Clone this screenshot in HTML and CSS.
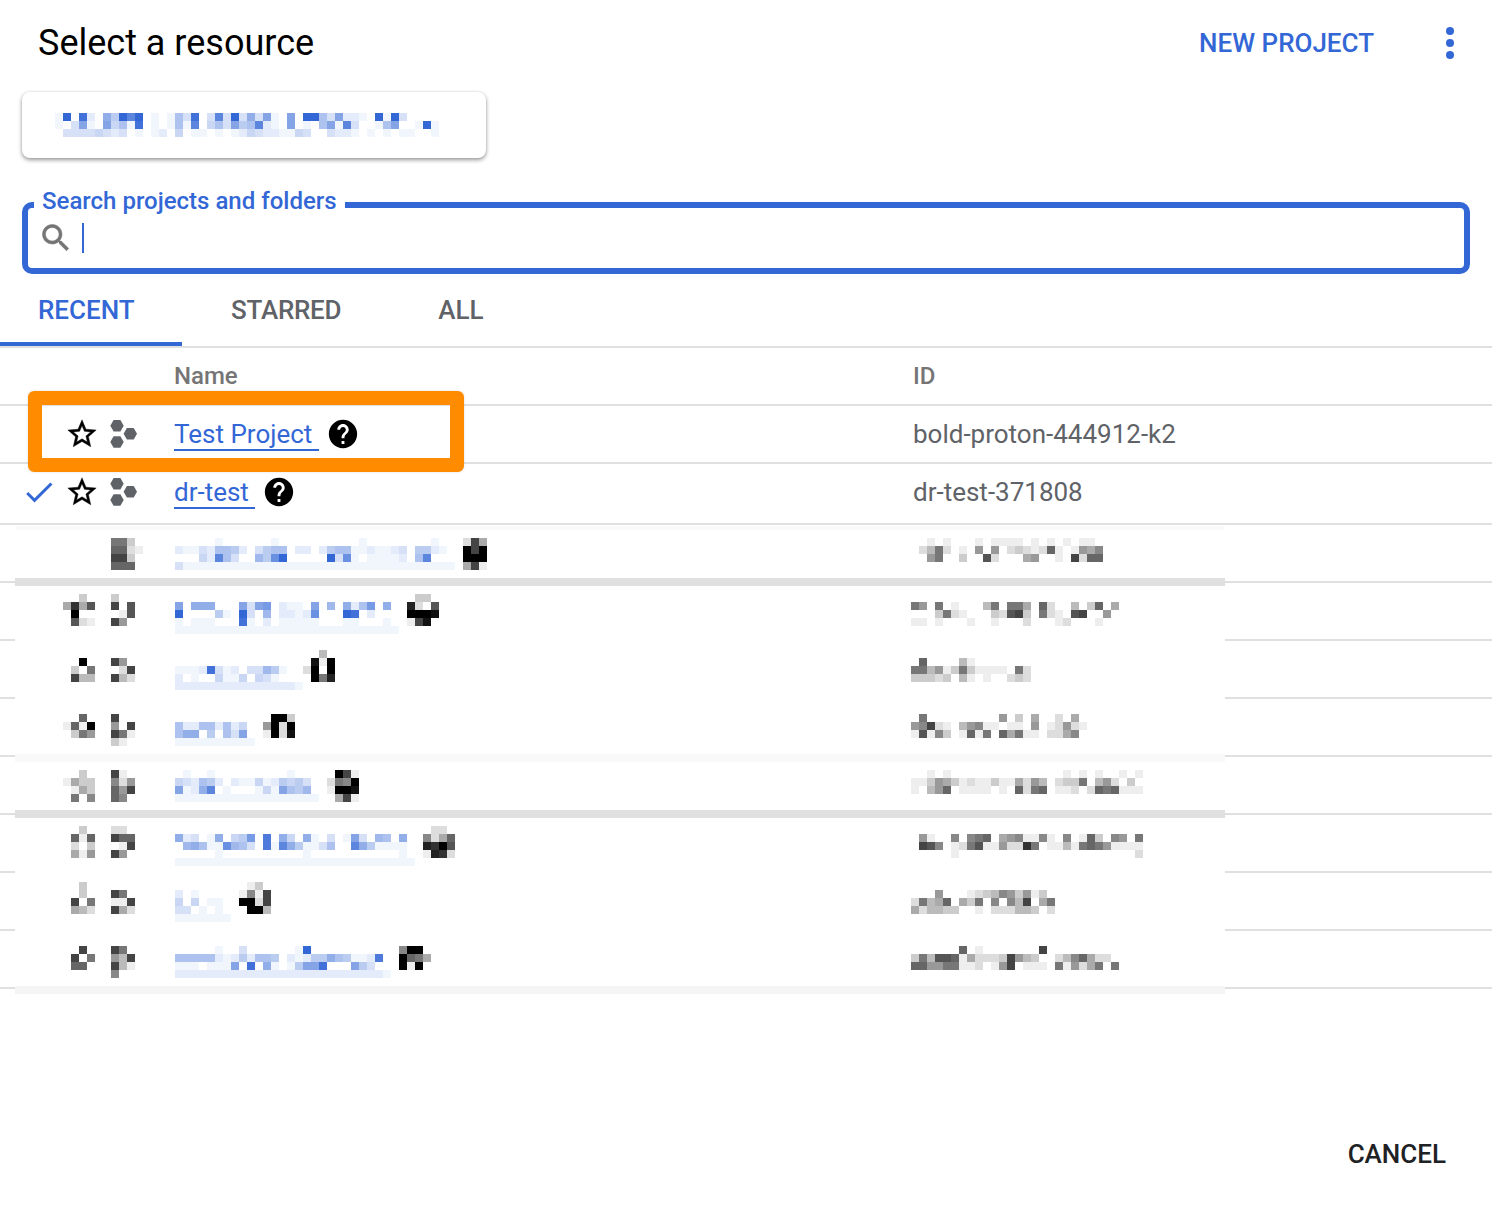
FILE: index.html
```html
<!DOCTYPE html>
<html lang="en">
<head>
<meta charset="utf-8">
<title>Select a resource</title>
<link rel="stylesheet" href="styles.css">
</head>
<body>
<main class="dialog">
  <header class="head">
    <h1 class="title">Select a resource</h1>
    <div class="head-actions">
      <button class="text-btn new-project">NEW PROJECT</button>
      <svg class="more" viewBox="0 0 24 24"><circle cx="12" cy="6" r="2"/><circle cx="12" cy="12" r="2"/><circle cx="12" cy="18" r="2"/></svg>
    </div>
  </header>

  <div class="org-chip"><svg id="chip-mosaic" class="chip-mosaic"></svg></div>

  <fieldset class="search">
    <legend class="search-label">Search projects and folders</legend>
    <div class="search-row">
      <svg class="search-icon" viewBox="0 0 24 24"><path d="M15.5 14h-.79l-.28-.27C15.41 12.59 16 11.11 16 9.5 16 5.91 13.09 3 9.5 3S3 5.91 3 9.5 5.91 16 9.5 16c1.61 0 3.09-.59 4.23-1.57l.27.28v.79l5 4.99L20.49 19l-4.99-5zm-6 0C7.01 14 5 11.99 5 9.5S7.01 5 9.5 5 14 7.01 14 9.5 11.99 14 9.5 14z"/></svg>
      <span class="caret"></span>
    </div>
  </fieldset>

  <nav class="tabs">
    <span class="tab tab-active">RECENT</span>
    <span class="tab tab-starred">STARRED</span>
    <span class="tab tab-all">ALL</span>
  </nav>

  <section class="table">
    <div class="row row-head"><span class="cell-name">Name</span><span class="cell-id">ID</span></div>

    <div class="row">
      <div class="cell-name">
        <div class="icons">
          <svg class="star" viewBox="0 0 24 24"><path d="M22 9.24l-7.19-.62L12 2 9.19 8.63 2 9.24l5.46 4.73L5.82 21 12 17.27 18.18 21l-1.63-7.03L22 9.24zM12 15.4l-3.76 2.27 1-4.28-3.32-2.88 4.38-.38L12 6.1l1.71 4.04 4.38.38-3.32 2.88 1 4.28L12 15.4z"/></svg>
          <svg class="project" viewBox="0 0 28 28"><polygon points="0.3,5.8 3.6,0 10.4,0 13.7,5.8 10.4,11.6 3.6,11.6"/><polygon points="0.3,22 3.6,16.2 10.4,16.2 13.7,22 10.4,27.8 3.6,27.8"/><polygon points="13.6,13.8 16.9,8 23.7,8 27,13.8 23.7,19.6 16.9,19.6"/></svg>
        </div>
        <a class="project-link project-link-wide">Test Project</a>
        <svg class="help" viewBox="0 0 24 24"><path d="M12 2C6.48 2 2 6.48 2 12s4.48 10 10 10 10-4.48 10-10S17.52 2 12 2zm1 17h-2v-2h2v2zm2.07-7.75l-.9.92C13.45 12.9 13 13.5 13 15h-2v-.5c0-1.1.45-2.1 1.17-2.83l1.24-1.26c.37-.36.59-.86.59-1.41 0-1.1-.9-2-2-2s-2 .9-2 2H8c0-2.21 1.79-4 4-4s4 1.79 4 4c0 .88-.36 1.68-.93 2.25z"/></svg>
      </div>
      <span class="cell-id">bold-proton-444912-k2</span>
    </div>

    <div class="row row-current">
      <div class="cell-name">
        <svg class="check" viewBox="0 0 24 24"><path d="M9 16.17L4.83 12l-1.42 1.41L9 19 21 7l-1.41-1.41z"/></svg>
        <div class="icons">
          <svg class="star" viewBox="0 0 24 24"><path d="M22 9.24l-7.19-.62L12 2 9.19 8.63 2 9.24l5.46 4.73L5.82 21 12 17.27 18.18 21l-1.63-7.03L22 9.24zM12 15.4l-3.76 2.27 1-4.28-3.32-2.88 4.38-.38L12 6.1l1.71 4.04 4.38.38-3.32 2.88 1 4.28L12 15.4z"/></svg>
          <svg class="project" viewBox="0 0 28 28"><polygon points="0.3,5.8 3.6,0 10.4,0 13.7,5.8 10.4,11.6 3.6,11.6"/><polygon points="0.3,22 3.6,16.2 10.4,16.2 13.7,22 10.4,27.8 3.6,27.8"/><polygon points="13.6,13.8 16.9,8 23.7,8 27,13.8 23.7,19.6 16.9,19.6"/></svg>
        </div>
        <a class="project-link">dr-test</a>
        <svg class="help" viewBox="0 0 24 24"><path d="M12 2C6.48 2 2 6.48 2 12s4.48 10 10 10 10-4.48 10-10S17.52 2 12 2zm1 17h-2v-2h2v2zm2.07-7.75l-.9.92C13.45 12.9 13 13.5 13 15h-2v-.5c0-1.1.45-2.1 1.17-2.83l1.24-1.26c.37-.36.59-.86.59-1.41 0-1.1-.9-2-2-2s-2 .9-2 2H8c0-2.21 1.79-4 4-4s4 1.79 4 4c0 .88-.36 1.68-.93 2.25z"/></svg>
      </div>
      <span class="cell-id">dr-test-371808</span>
    </div>

    <div class="row"></div><div class="row"></div><div class="row"></div><div class="row"></div>
    <div class="row"></div><div class="row"></div><div class="row"></div><div class="row"></div>
  </section>

  <footer class="foot"><button class="text-btn cancel">CANCEL</button></footer>

  <svg id="redaction" class="redaction"></svg>
  <div class="highlight"></div>
</main>
<script src="mosaic.js"></script>
</body>
</html>
```
FILE: styles.css
```css
* { box-sizing: border-box; }
html, body { margin: 0; padding: 0; background: #fff; }
body { font-family: Roboto, "Liberation Sans", sans-serif; color: #202124; }

.dialog { position: relative; display: flex; flex-direction: column; width: 1492px; height: 1218px; overflow: hidden; }

.head { display: flex; justify-content: space-between; align-items: center; height: 86px; padding: 0 18px 0 38px; }
.title { margin: 0; font-size: 36px; font-weight: 400; color: #000; }
.head-actions { display: flex; align-items: center; gap: 52px; }
.text-btn { border: 0; padding: 0; background: none; font: 500 26px Roboto, sans-serif; }
.new-project { color: #3367d6; }
.more { width: 48px; height: 48px; fill: #3367d6; }

.org-chip { display: flex; align-items: center; width: 464px; height: 66px; margin: 6px 0 0 22px; padding-left: 33px; background: #fff; border-radius: 8px; box-shadow: 0 2px 4px rgba(0,0,0,.4), 0 0 3px rgba(0,0,0,.08); }
.chip-mosaic { display: block; }

.search { display: block; height: 87px; margin: 29px 22px 0; padding: 0 12px; min-width: 0; border: 6px solid #3367d6; border-radius: 10px; }
.search-label { margin-left: -6px; padding: 0 8px 8px; font-size: 24px; line-height: 28px; font-weight: 500; color: #3367d6; }
.search-row { display: flex; align-items: center; height: 50px; margin: -10px 0 0 -2px; gap: 8px; }
.search-icon { width: 36px; height: 36px; flex: none; fill: #757575; stroke: #757575; stroke-width: .35; }
.caret { width: 2px; height: 30px; background: #3367d6; }

.tabs { display: flex; height: 74px; border-bottom: 2px solid #e0e0e0; }
.tab { display: flex; align-items: center; height: 72px; font-size: 26px; font-weight: 500; color: #5f6368; }
.tab-active { width: 182px; padding: 4px 0 0 38px; color: #3367d6; border-bottom: 4px solid #3367d6; }
.tab-starred { margin-left: 49px; letter-spacing: -.25px; }
.tab-all { margin-left: 97px; }

.row { display: grid; grid-template-columns: 913px 1fr; align-items: center; height: 58px; border-bottom: 2px solid #e0e0e0; font-size: 26px; color: #5f6368; }
.row-head { font-size: 24px; font-weight: 500; color: #757575; }
.row-current { height: 61px; padding-bottom: 3px; }
.cell-name { position: relative; display: flex; align-items: center; padding-left: 174px; }
.icons { position: absolute; left: 65px; display: flex; align-items: center; gap: 11px; }
.star { width: 34px; height: 34px; fill: #000; stroke: #000; stroke-width: .3; }
.project { width: 28px; height: 28px; fill: #5f6368; }
.check { position: absolute; left: 21px; width: 36px; height: 36px; fill: #3367d6; }
.project-link { padding: 2px 6px 0 0; border-bottom: 2px solid #3367d6; color: #3367d6; line-height: 30px; }
.project-link-wide { padding-right: 7px; }
.help { width: 34px; height: 34px; margin-left: 7px; fill: #000; }

.foot { display: flex; justify-content: flex-end; margin-top: auto; padding: 0 46px 49px 0; }
.cancel { color: #202124; }

.redaction { position: absolute; left: 15px; top: 526px; background: #fff; }
.highlight { position: absolute; left: 28px; top: 391px; width: 436px; height: 81px; border: 14px solid #ff8c00; border-radius: 6px; box-shadow: 0 0 3px rgba(0,0,0,.12); }
```
FILE: mosaic.js
```javascript
// Redacted entries are rendered as 8px mosaics; each hex digit is a cell's opacity.
var NS = 'http://www.w3.org/2000/svg';
var BLUE = '#3367d6', INK = '#000';

function drawCells(svg, x, y, color, rows) {
  rows.forEach(function (row, r) {
    row.replace(/ /g, '').split('').forEach(function (digit, c) {
      var level = parseInt(digit, 16);
      if (!level) return;
      rect(svg, x + c * 8, y + r * 8, 8, 8, color, (level / 15).toFixed(3));
    });
  });
}

function rect(svg, x, y, w, h, fill, opacity) {
  var el = document.createElementNS(NS, 'rect');
  el.setAttribute('x', x);
  el.setAttribute('y', y);
  el.setAttribute('width', w);
  el.setAttribute('height', h);
  el.setAttribute('fill', fill);
  if (opacity) el.setAttribute('fill-opacity', opacity);
  svg.appendChild(el);
}

function size(svg, w, h) {
  svg.setAttribute('width', w);
  svg.setAttribute('height', h);
  svg.setAttribute('viewBox', '0 0 ' + w + ' ' + h);
  svg.setAttribute('shape-rendering', 'crispEdges');
}

var chip = document.getElementById('chip-mosaic');
size(chip, 384, 24);
drawCells(chip, 0, 0, BLUE, [
  '1f0e2085fcf01016 3e03c3f38391 09 0ff 639221 0f1f3',
  '10391094 61e01016 1c0 4 6 3 9 5 6 c 2 1 0 9 0 1 0 6 9 1 c 3 0 0 1 6 9 0 0 1 f 1',
  '033334323010120 4 0 1 1 0 1 0 1 2 4 3 2 2 1 1 4 3 0 0 3 2 2 1 0 1 0 1 0 1 1 0 0 1 0'
]);

var red = document.getElementById('redaction');
size(red, 1210, 468);
var Y0 = 526;

function at(col, y, color, rows) { drawCells(red, col * 8, y - Y0, color, rows); }
function band(y, h, fill) { rect(red, 0, y - Y0, 1210, h, fill); }

band(526, 4, '#fafafa');
band(578, 8, '#e0e0e0');
band(754, 8, '#f9f9f9');
band(810, 8, '#e0e0e0');
band(986, 8, '#f5f5f5');

// row 3
at(12, 538, INK, ['8830', '9921', 'bb30', '9990']);
at(20, 538, BLUE, [
  '00000100000010000000000100000000100',
  '2113266520356602202566112112305521',
  '00042c63007 5bf00000f3b10111120 6c',
  '31111111111111111111111111111111111'
]);
at(56, 538, INK, ['2b5', 'fbf', 'fff', '5b1']);
at(112, 538, INK, [
  '001010001011110101010110',
  '024820106060232129101657',
  '0068003 00a200056001 0b299'
]);

// row 4
at(6, 594, INK, ['0030', '5c5a', '0f00', '0a21']);
at(12, 594, INK, ['300', 'b0a', '01a', 'b60']);
at(20, 602, BLUE, [
  '9088800 09 39a0 2110 9070 826a0 80',
  'f00005 10f3 0 7 0 2 2 1 2 b 0 0 0 f e 0 2',
  '10111000e1 0 2 0 1 1 1 1 1 0 0 0 1 1 0 0 0 1',
  '1111111111111111111111111111'
]);
at(49, 594, INK, ['0330', 'd20a', 'fffe', '1be0']);
at(112, 602, INK, [
  '86080100048088509200 4 0 3 9 0 5',
  '000382100032ab30821 0a b 0 0 6',
  '1101000100100 0 2 0 0 0 1 2 0 0 0 1'
]);

// row 5
at(7, 658, INK, ['0f0', '308', 'b44']);
at(12, 658, INK, ['b60', '02b', 'b42']);
at(20, 666, BLUE, [
  '11 12e3 12 0 3 3 7 5 1',
  '2 0 1 0 0 4 1 1 4 0 4 3 1',
  '2222222222222221'
]);
at(36, 650, INK, ['0040', '0e1f', '2f0f', '0f8d']);
at(112, 658, INK, [
  '090000 41',
  '884613 83 1 1 1 1 0 8 2',
  '333230 41 0 1 0 0 2 3 2'
]);

// row 6
at(6, 714, INK, ['0090', '191f', '0386']);
at(12, 714, INK, ['b000', '60b0', 'b810', '3100']);
at(20, 722, BLUE, ['622662624', '688050639', '1111111111']);
at(31, 714, INK, ['0ff3', '6f2f', '1f2e']);
at(112, 714, INK, [
  '080000000006 0 3 0 5 0 0 2 0 5',
  '67b210467110 1 1 0 6 0 1 2 6 2 1',
  '1a1730191809 5 8 1 1 0 2 2 5 7'
]);

// row 7
at(6, 770, INK, ['0030', '1533', '0153', '0807']);
at(12, 770, INK, ['b10', '726', '96b', '970']);
at(20, 770, BLUE, [
  '010010000000 0 0 1',
  '43265 2021 14 1 2 5 4 5 3',
  '9128c 0100 01 4 1 9 6 5 7',
  '111111111111111111'
]);
at(39, 770, INK, ['0fb1', '287f', '1ffe', '05b1']);
at(112, 770, INK, [
  '00101000000000000001010100101',
  '113653121131152 64 0 2 3 3 8 0 4 6 2 0 3 0',
  '104690111101092 89 0 1 1 2 0 2 9 8 9 1 1 1'
]);

// row 8
at(7, 826, INK, ['030', '919', '203', '516']);
at(12, 826, INK, ['220', 'b99', '01b', 'b60']);
at(20, 834, BLUE, [
  '82301 8045a 0d 0 8 4 0 8 1 0 3 0 1 9 3 0 7 6 0 8',
  '07861 1b763 0d 1 c 8 5 1 1 3 6 0 0 c 8 5 1 1 1 1',
  '00000 10000 00 0 0 0 0 1 0 0 0 0 0 0 0 0 0 0 0 1',
  '111111111111111111111111111111'
]);
at(51, 826, INK, ['0220', '7259', 'dcfa', '1dc2']);
at(112, 834, INK, [
  '06100 70789 05 6 7 1 1 7 1 0 7 0 1 9 3 0 7 6 0 8',
  '0ba70 128a1 16 2 2 c 8 0 1 1 4 1 8 9 8 6 1 1 1 1',
  '00000 10000 00 0 0 0 0 0 0 0 0 0 0 0 0 0 0 0 0 2'
]);

// row 9
at(7, 882, INK, ['030', '030', 'b08', '542']);
at(12, 890, INK, ['b80', '11b', 'b52']);
at(20, 890, BLUE, ['201', '404011', '330101', '1111111']);
at(28, 882, INK, ['0130', '171b', 'ff2b', '0ff4']);
at(112, 890, INK, [
  '000600012 34 7 6 3 6 1 3',
  '284590538 07 0 7 4 b 0 5 8',
  '524433001 02 2 2 4 4 3 0 2'
]);

// row 10
at(7, 946, INK, ['0b0', 'b08', '990']);
at(12, 946, INK, ['b80', '64b', 'b41', '700']);
at(20, 946, BLUE, [
  '00000100300 0 0 0 0 1 f',
  '66666212526 6 5 0 2 1 2 5 5 8 6 5 1 1 2 d',
  '11101119 0e 0 8 1 0 1 5 9 9 e 0 0 0 9 5 3',
  '222222222222222222222222221'
]);
at(48, 946, INK, ['7ff0', 'f985', 'f1f0']);
at(112, 946, INK, [
  '000000901 00 0 0 0 0 0 b',
  '384aa9152 22 3 b 6 4 3 0 0 2 4 7 9 5 2 2',
  '996688112 01 6 b 0 1 1 1 0 8 1 6 2 5 8 0 8'
]);
```
